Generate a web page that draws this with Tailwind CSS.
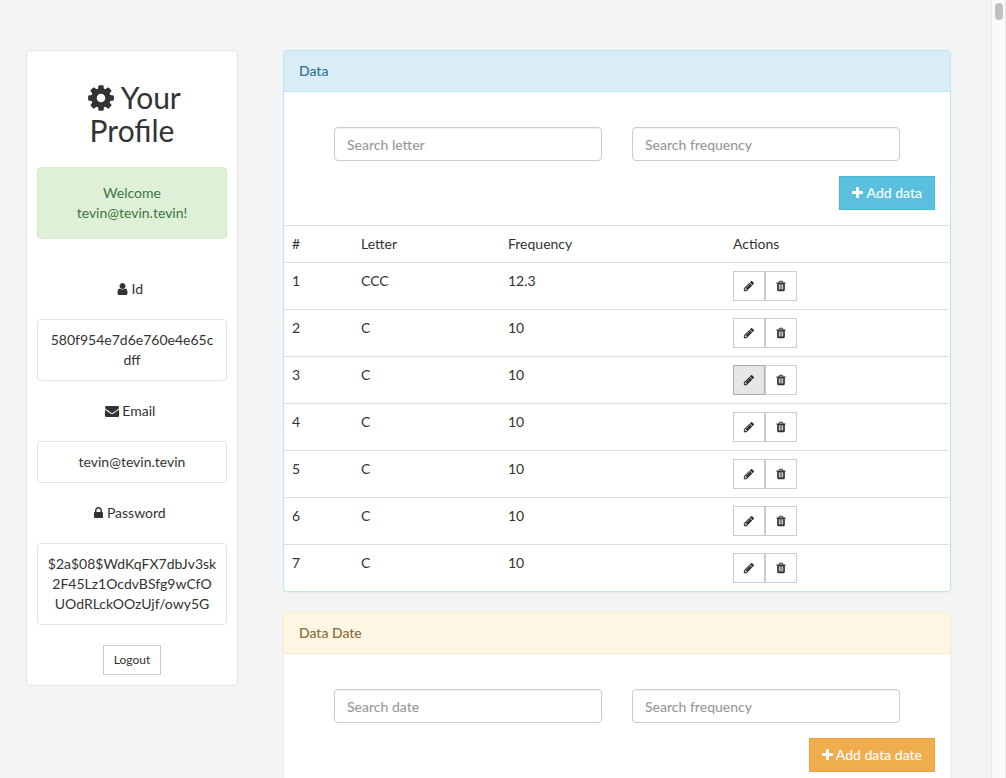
<!DOCTYPE html>
<html lang="en">
<head>
<meta charset="utf-8">
<title>Your Profile</title>
<script src="https://cdn.jsdelivr.net/npm/@tailwindcss/browser@4"></script>
</head>
<body class="flex h-screen overflow-hidden bg-[#f4f4f4] font-['Lato',sans-serif] text-sm/5 text-[#333]">
<svg class="hidden" aria-hidden="true">
  <symbol id="cog" viewBox="128 0 1536 1792"><path d="M1152 896q0-106-75-181t-181-75-181 75-75 181 75 181 181 75 181-75 75-181zm512-109v222q0 12-8 23t-20 13l-185 28q-19 54-39 91 35 50 107 138 10 12 10 25t-9 23q-27 37-99 108t-94 71q-12 0-26-9l-138-108q-44 23-91 38-16 136-29 186-7 28-36 28h-222q-14 0-24.5-8.5t-11.5-21.5l-28-184q-49-16-90-37l-141 107q-10 9-25 9-14 0-25-11-126-114-165-168-7-10-7-23 0-12 8-23 15-21 51-66.5t54-70.5q-27-50-41-99l-183-27q-13-2-21-12.5t-8-23.5v-222q0-12 8-23t19-13l186-28q14-46 39-92-40-57-107-138-10-12-10-24 0-10 9-23 26-36 98.5-107.5t94.5-71.5q13 0 26 10l138 107q44-23 91-38 16-136 29-186 7-28 36-28h222q14 0 24.5 8.5t11.5 21.5l28 184q49 16 90 37l142-107q9-9 24-9 13 0 25 10 129 119 165 170 7 8 7 22 0 12-8 23-15 21-51 66.5t-54 70.5q26 50 41 98l183 28q13 2 21 12.5t8 23.5z"/></symbol>
  <symbol id="user" viewBox="256 0 1280 1792"><path d="M1536 1399q0 109-62.5 187t-150.5 78h-854q-88 0-150.5-78t-62.5-187q0-85 8.5-160.5t31.5-152 58.5-131 94-89 134.5-34.5q131 128 313 128t313-128q76 0 134.5 34.5t94 89 58.5 131 31.5 152 8.5 160.5zm-256-887q0 159-112.5 271.5t-271.5 112.5-271.5-112.5-112.5-271.5 112.5-271.5 271.5-112.5 271.5 112.5 112.5 271.5z"/></symbol>
  <symbol id="envelope" viewBox="0 0 1792 1792"><path d="M1792 710v794q0 66-47 113t-113 47h-1472q-66 0-113-47t-47-113v-794q44 49 101 87 362 246 497 345 57 42 92.5 65.5t94.5 48 110 24.5h2q51 0 110-24.5t94.5-48 92.5-65.5q170-123 498-345 57-39 100-87zm0-294q0 79-49 151t-122 123q-376 261-468 325-10 7-42.5 31t-54 38.5-52 32.5-57.5 27-50 9h-2q-23 0-50-9t-57.5-27-52-32.5-54-38.5-42.5-31q-91-64-262-182.5t-205-142.5q-62-42-117-115.5t-55-136.5q0-78 41.5-130t118.5-52h1472q65 0 112.5 47t47.5 113z"/></symbol>
  <symbol id="lock" viewBox="320 0 1152 1792"><path d="M640 768h512v-192q0-106-75-181t-181-75-181 75-75 181v192zm832 96v576q0 40-28 68t-68 28h-960q-40 0-68-28t-28-68v-576q0-40 28-68t68-28h32v-192q0-184 132-316t316-132 316 132 132 316v192h32q40 0 68 28t28 68z"/></symbol>
  <symbol id="plus" viewBox="192 0 1408 1792"><path d="M1600 736v192q0 40-28 68t-68 28h-416v416q0 40-28 68t-68 28h-192q-40 0-68-28t-28-68v-416h-416q-40 0-68-28t-28-68v-192q0-40 28-68t68-28h416v-416q0-40 28-68t68-28h192q40 0 68 28t28 68v416h416q40 0 68 28t28 68z"/></symbol>
  <symbol id="pencil" viewBox="0 0 1792 1792"><path d="M491 1536l91-91-235-235-91 91v107h128v128h107zm523-928q0-22-22-22-10 0-17 7l-542 542q-7 7-7 17 0 22 22 22 10 0 17-7l542-542q7-7 7-17zm-54-192l416 416-832 832h-416v-416zm683 96q0 53-37 90l-166 166-416-416 166-165q36-38 90-38 53 0 91 38l235 234q37 39 37 91z"/></symbol>
  <symbol id="trash" viewBox="0 0 1792 1792"><path d="M704 1376v-704q0-14-9-23t-23-9h-64q-14 0-23 9t-9 23v704q0 14 9 23t23 9h64q14 0 23-9t9-23zm256 0v-704q0-14-9-23t-23-9h-64q-14 0-23 9t-9 23v704q0 14 9 23t23 9h64q14 0 23-9t9-23zm256 0v-704q0-14-9-23t-23-9h-64q-14 0-23 9t-9 23v704q0 14 9 23t23 9h64q14 0 23-9t9-23zm-544-992h448l-48-117q-7-9-17-11h-317q-10 2-17 11zm928 32v64q0 14-9 23t-23 9h-96v948q0 83-47 143.5t-113 60.5h-832q-66 0-113-58.5t-47-141.5v-952h-96q-14 0-23-9t-9-23v-64q0-14 9-23t23-9h309l70-167q15-37 54-63t79-26h320q40 0 79 26t54 63l70 167h309q14 0 23 9t9 23z"/></symbol>
</svg>

<div class="flex min-w-0 flex-1 items-start gap-[45px] overflow-hidden pt-[50px] pr-10 pl-[26px]">
  <aside class="w-[212px] shrink-0 rounded-sm border border-[#e3e3e3] bg-white p-2.5 text-center">
    <h2 class="mt-5 mb-5 px-5 text-[30px]/[33px]"><svg class="ml-[5px] inline h-[30px] w-[26px] fill-current align-[-4px]"><use href="#cog"/></svg> Your Profile</h2>
    <div class="mb-10 rounded-sm border border-[#d6e9c6] bg-[#dff0d8] p-[15px] text-[#3c763d]">Welcome tevin@tevin.tevin!</div>
    <p class="mb-5 pr-1"><svg class="inline h-3.5 w-[11px] fill-current align-[-2px]"><use href="#user"/></svg> Id</p>
    <div class="mb-5 rounded-sm border border-[#e3e3e3] p-2.5 break-all">580f954e7d6e760e4e65cdff</div>
    <p class="mb-5 pr-1"><svg class="inline h-3.5 w-3.5 fill-current align-[-2px]"><use href="#envelope"/></svg> Email</p>
    <div class="mb-5 rounded-sm border border-[#e3e3e3] p-2.5 break-all">tevin@tevin.tevin</div>
    <p class="mb-5 pr-1"><svg class="inline h-3.5 w-[9px] fill-current align-[-2px]"><use href="#lock"/></svg> Password</p>
    <div class="mb-5 rounded-sm border border-[#e3e3e3] px-2 py-2.5 break-all">$2a$08$WdKqFX7dbJv3sk<br>2F45Lz1OcdvBSfg9wCfO<br>UOdRLckOOzUjf/owy5G</div>
    <button class="block mx-auto h-[30px] border border-[#ccc] bg-white px-2.5 text-xs">Logout</button>
  </aside>

  <main class="flex min-w-0 flex-1 flex-col gap-5">
    <section class="rounded-sm border border-[#bce8f1] bg-white shadow-xs">
      <h3 class="rounded-t-[3px] border-b border-[#bce8f1] bg-[#d9edf7] px-[15px] py-2.5 font-medium text-[#31708f]">Data</h3>
      <div class="grid grid-cols-2 gap-[30px] px-[50px] pt-[35px]">
        <input class="h-[34px] min-w-0 rounded-sm border border-[#ccc] px-3 inset-shadow-2xs placeholder:font-medium placeholder:text-[#999]" placeholder="Search letter" aria-label="Search letter">
        <input class="h-[34px] min-w-0 rounded-sm border border-[#ccc] px-3 inset-shadow-2xs placeholder:font-medium placeholder:text-[#999]" placeholder="Search frequency" aria-label="Search frequency">
      </div>
      <div class="flex justify-end p-[15px]">
        <button class="h-[34px] border border-[#46b8da] bg-[#5bc0de] px-3 font-medium text-white"><svg class="inline h-3.5 w-[11px] fill-current align-[-2px]"><use href="#plus"/></svg> Add data</button>
      </div>
      <table class="w-[calc(100%-1px)] table-fixed border-separate border-spacing-0 text-left align-top [&_button]:flex [&_button]:h-[30px] [&_button]:w-8 [&_button]:items-center [&_button]:justify-center [&_button]:border [&_button]:border-[#ccc] [&_svg]:size-3 [&_svg]:fill-current [&_td]:border-t [&_td]:border-[#ddd] [&_td]:p-2 [&_td]:align-top [&_th]:border-t [&_th]:border-[#ddd] [&_th]:p-2 [&_th]:font-normal">
        <thead>
          <tr><th class="w-[69px]">#</th><th class="w-[147px]">Letter</th><th class="w-[225px]">Frequency</th><th>Actions</th></tr>
        </thead>
        <tbody>
          <tr><td>1</td><td>CCC</td><td>12.3</td><td><div class="flex"><button aria-label="Edit"><svg><use href="#pencil"/></svg></button><button aria-label="Delete"><svg><use href="#trash"/></svg></button></div></td></tr>
          <tr><td>2</td><td>C</td><td>10</td><td><div class="flex"><button aria-label="Edit"><svg><use href="#pencil"/></svg></button><button aria-label="Delete"><svg><use href="#trash"/></svg></button></div></td></tr>
          <tr><td>3</td><td>C</td><td>10</td><td><div class="flex"><button class="border-[#adadad]! bg-[#e6e6e6]" aria-label="Edit"><svg><use href="#pencil"/></svg></button><button aria-label="Delete"><svg><use href="#trash"/></svg></button></div></td></tr>
          <tr><td>4</td><td>C</td><td>10</td><td><div class="flex"><button aria-label="Edit"><svg><use href="#pencil"/></svg></button><button aria-label="Delete"><svg><use href="#trash"/></svg></button></div></td></tr>
          <tr><td>5</td><td>C</td><td>10</td><td><div class="flex"><button aria-label="Edit"><svg><use href="#pencil"/></svg></button><button aria-label="Delete"><svg><use href="#trash"/></svg></button></div></td></tr>
          <tr><td>6</td><td>C</td><td>10</td><td><div class="flex"><button aria-label="Edit"><svg><use href="#pencil"/></svg></button><button aria-label="Delete"><svg><use href="#trash"/></svg></button></div></td></tr>
          <tr><td>7</td><td>C</td><td>10</td><td><div class="flex"><button aria-label="Edit"><svg><use href="#pencil"/></svg></button><button aria-label="Delete"><svg><use href="#trash"/></svg></button></div></td></tr>
        </tbody>
      </table>
    </section>

    <section class="rounded-sm border border-[#faebcc] bg-white pb-5 shadow-xs">
      <h3 class="rounded-t-[3px] border-b border-[#faebcc] bg-[#fdf6e3] px-[15px] py-2.5 font-medium text-[#8a6d3b]">Data Date</h3>
      <div class="grid grid-cols-2 gap-[30px] px-[50px] pt-[35px]">
        <input class="h-[34px] min-w-0 rounded-sm border border-[#ccc] px-3 inset-shadow-2xs placeholder:font-medium placeholder:text-[#999]" placeholder="Search date" aria-label="Search date">
        <input class="h-[34px] min-w-0 rounded-sm border border-[#ccc] px-3 inset-shadow-2xs placeholder:font-medium placeholder:text-[#999]" placeholder="Search frequency" aria-label="Search frequency">
      </div>
      <div class="flex justify-end p-[15px]">
        <button class="h-[34px] border border-[#eea236] bg-[#f0ad4e] px-3 font-medium text-white"><svg class="inline h-3.5 w-[11px] fill-current align-[-2px]"><use href="#plus"/></svg> Add data date</button>
      </div>
    </section>
  </main>
</div>

<div class="flex w-[15px] shrink-0 justify-center border-x border-[#e7e7e7] bg-[#fafafa] pt-[3px]" aria-hidden="true">
  <div class="h-[17px] w-2 rounded-full bg-[#c1c1c1]"></div>
</div>
</body>
</html>
